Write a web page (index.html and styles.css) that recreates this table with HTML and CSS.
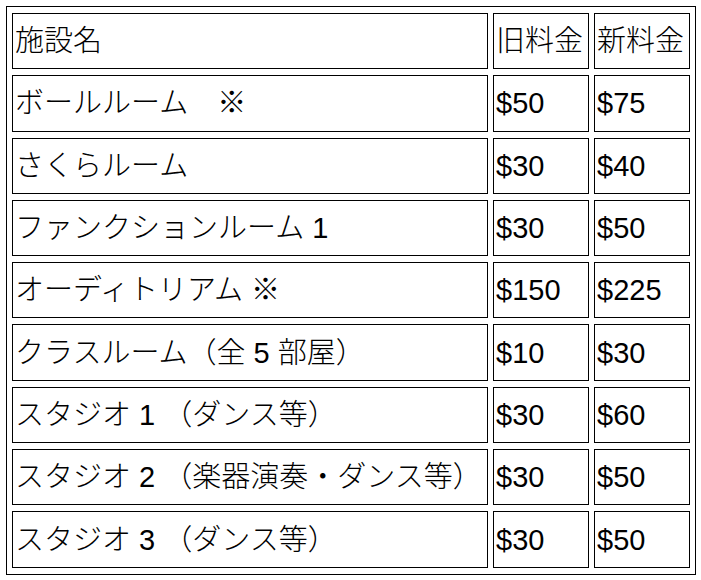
FILE: index.html
```html
<!DOCTYPE html>
<html lang="ja">
<head>
<meta charset="utf-8">
<title>料金表</title>
<link rel="stylesheet" href="styles.css">
</head>
<body>
<table class="fees">
  <tr><td class="name">施設名</td><td class="price">旧料金</td><td class="price">新料金</td></tr>
  <tr><td class="name">ボールルーム　※</td><td class="price">$50</td><td class="price">$75</td></tr>
  <tr><td class="name">さくらルーム</td><td class="price">$30</td><td class="price">$40</td></tr>
  <tr><td class="name">ファンクションルーム 1</td><td class="price">$30</td><td class="price">$50</td></tr>
  <tr><td class="name">オーディトリアム ※</td><td class="price">$150</td><td class="price">$225</td></tr>
  <tr><td class="name">クラスルーム（全 5 部屋）</td><td class="price">$10</td><td class="price">$30</td></tr>
  <tr><td class="name">スタジオ 1 （ダンス等）</td><td class="price">$30</td><td class="price">$60</td></tr>
  <tr><td class="name">スタジオ 2 （楽器演奏・ダンス等）</td><td class="price">$30</td><td class="price">$50</td></tr>
  <tr><td class="name">スタジオ 3 （ダンス等）</td><td class="price">$30</td><td class="price">$50</td></tr>
</table>
</body>
</html>
```
FILE: styles.css
```css
html, body {
  margin: 0;
  padding: 0;
  background: #ffffff;
}

.fees {
  margin: 6px 0 0 6px;
  border: 1px solid #000;
  border-spacing: 5px 6px;
  table-layout: fixed;
  font-family: "Liberation Sans", "Noto Sans CJK JP", sans-serif;
  font-size: 29px;
  font-weight: 300;
  color: #000;
}

.fees td {
  border: 1px solid #000;
  box-sizing: border-box;
  height: 56.3px;
  padding: 0 2px;
  white-space: nowrap;
  vertical-align: middle;
  line-height: 32px;
}

.fees td.name {
  width: 476px;
}

.fees td.price {
  width: 96px;
}
```
